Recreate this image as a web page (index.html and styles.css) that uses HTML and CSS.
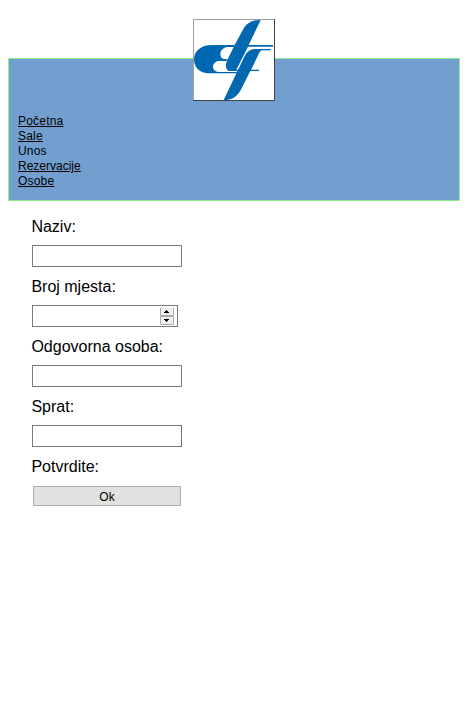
FILE: index.html
```html
<!DOCTYPE html>
<html lang="bs">
<head>
<meta charset="utf-8">
<title>Unos</title>
<link rel="stylesheet" href="styles.css">
</head>
<body>
<header class="header">
  <svg class="logo" viewBox="15 15 246 246" aria-label="Logo">
    <rect class="logo-bg" x="15" y="15" width="246" height="246"/>
    <g class="logo-mark">
      <path d="M218 18C192 17 176 27 166 45L140 93H72C38 93 18 112 18 136C18 162 36 178 62 178H150V174H92C81 173 75 167 75 159C75 149 83 141 94 141H115L119 135H110C102 135 97 129 97 120C97 108 109 99 119 99H137L117 140C110 157 114 171 128 171H213V167H145L180 98H255V93H182Z"/>
      <path d="M249 105H203C187 105 177 113 170 126L107 258C132 258 146 248 157 230L209 127C213 117 216 109 224 109H248Z"/>
    </g>
    <path class="logo-edge-light" d="M16.5 261V16.5H261"/>
    <path class="logo-edge-dark" d="M15 259.5H259.5V15"/>
  </svg>
  <nav class="nav">
    <a href="#">Početna</a>
    <a href="#">Sale</a>
    <span>Unos</span>
    <a class="nav-long" href="#">Rezervacije</a>
    <a href="#">Osobe</a>
  </nav>
</header>
<form class="form">
  <label for="naziv">Naziv:</label>
  <input class="field" id="naziv" type="text">
  <label for="broj">Broj mjesta:</label>
  <div class="field number">
    <input class="number-input" id="broj" type="text">
    <svg class="spinner" viewBox="0 0 14 18">
      <rect class="spin-base" width="14" height="18"/>
      <path class="spin-edge" d="M.5 1V8.5H13.5V1M.5 9.5H13.5V17.5H.5Z"/>
      <path class="spin-arrow" d="M4 6V5H5V4H6V3H7V4H8V5H9V6ZM4 12H9V13H8V14H7V15H6V14H5V13H4Z"/>
    </svg>
  </div>
  <label for="osoba">Odgovorna osoba:</label>
  <input class="field" id="osoba" type="text">
  <label for="sprat">Sprat:</label>
  <input class="field" id="sprat" type="text">
  <label for="ok">Potvrdite:</label>
  <button class="submit" id="ok" type="button">Ok</button>
</form>
</body>
</html>
```
FILE: styles.css
```css
* { box-sizing: border-box; }
body {
  margin: 0;
  padding: 58px 8px 0;
  background: #fff;
  color: #000;
  font-family: "Liberation Sans", Arial, sans-serif;
}
.header {
  height: 143px;
  background: #729fcf;
  border: 1px solid #90ee90;
}
.logo {
  display: block;
  width: 82px;
  height: 82px;
  margin: -40px auto 0;
}
.logo-bg { fill: #fff; }
.logo-mark { fill: #0067b1; }
.logo-edge-light, .logo-edge-dark { fill: none; stroke-width: 3; }
.logo-edge-light { stroke: #a0a0a0; }
.logo-edge-dark { stroke: #404040; }
.nav {
  display: flex;
  flex-direction: column;
  align-items: flex-start;
  margin: 13px 0 0 9px;
  font-size: 12px;
  line-height: 15px;
  letter-spacing: 0.2px;
}
.nav a { color: #000; }
.nav .nav-long { letter-spacing: 0; }
.form {
  display: flex;
  flex-direction: column;
  align-items: flex-start;
  margin: 11px 0 0 23px;
  font-size: 16px;
}
.form label { height: 30px; padding-left: 0.4px; line-height: 30px; }
.field {
  width: 150px;
  height: 22px;
  margin: 3px 0 5px 1px;
  padding: 1px 2px;
  border: 1px solid #7a7a7a;
  background: #fff;
}
.number {
  display: flex;
  align-items: center;
  justify-content: space-between;
  width: 146px;
  padding-right: 3px;
}
.number-input { width: 120px; height: 16px; padding: 0; border: 0; outline: 0; }
.spinner { width: 14px; height: 18px; }
.spin-base { fill: #f0f0f0; }
.spin-edge { fill: none; stroke: #acacac; }
.spin-arrow { fill: #000; }
.submit {
  width: 148px;
  height: 20px;
  margin: 4px 0 0 2px;
  padding: 1px 0 0;
  border: 1px solid #adadad;
  background: #e1e1e1;
  color: #000;
  font: 12px "Liberation Sans", Arial, sans-serif;
}
```
